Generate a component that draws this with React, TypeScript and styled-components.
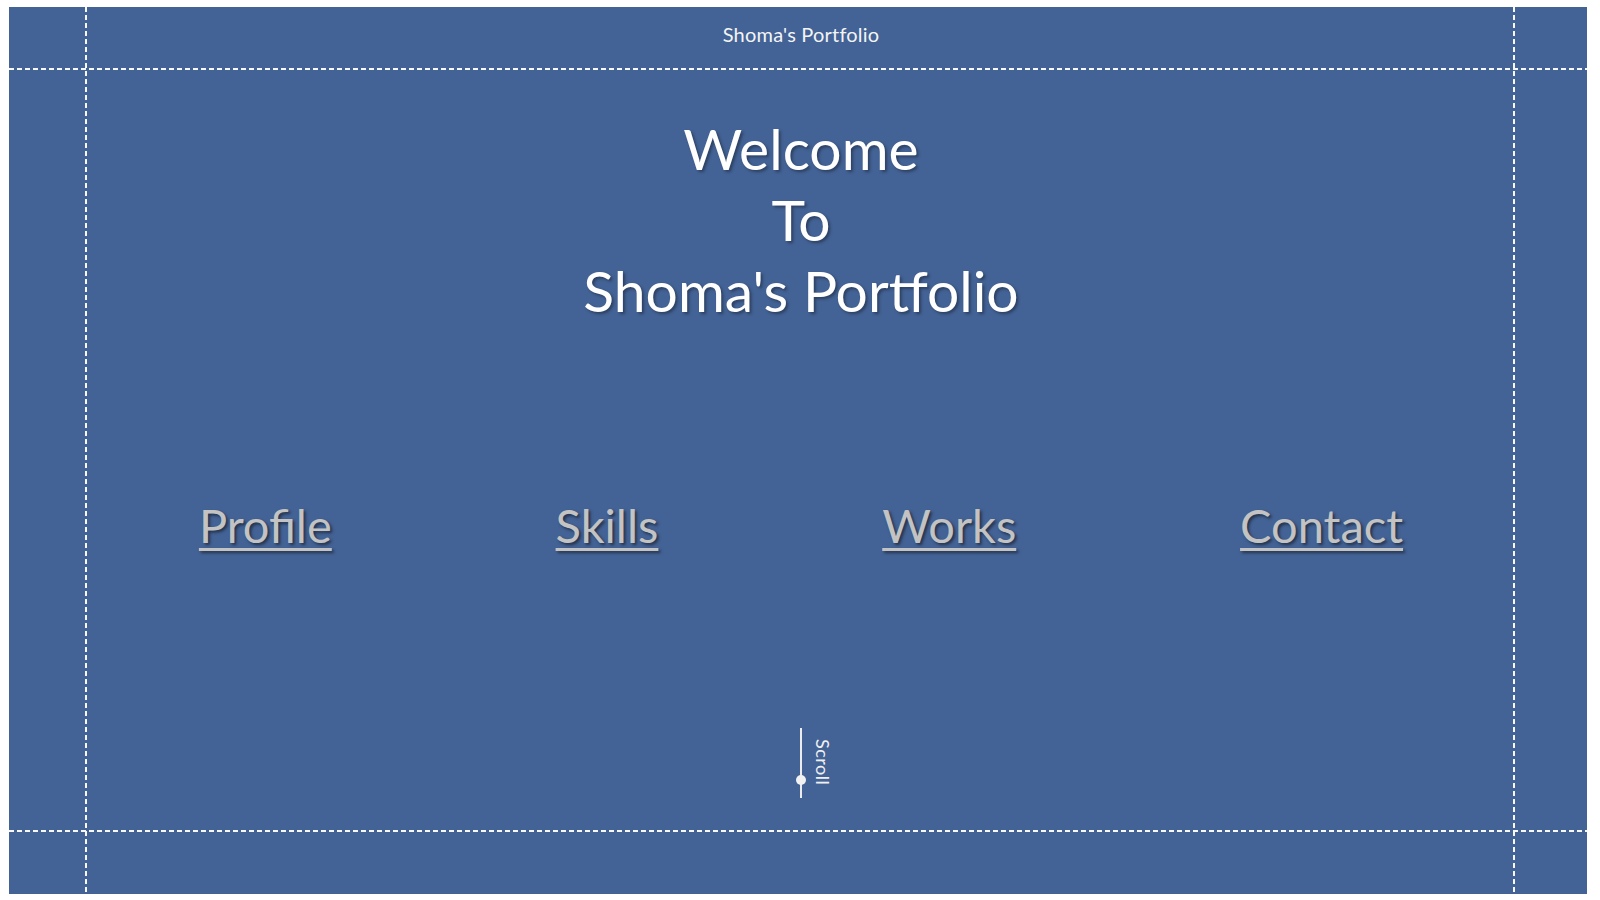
import styled, { createGlobalStyle } from 'styled-components';

const GlobalStyle = createGlobalStyle`
  html, body {
    margin: 0;
    padding: 0;
    background: #fff;
  }
  body {
    font-family: Lato, 'Open Sans', sans-serif;
  }
`;

const dash = '#f8f8f8';

const Frame = styled.div`
  margin: 7px 13px 6px 9px;
  height: 887px;
  display: grid;
  grid-template-columns: 78px 1fr 72px;
  grid-template-rows: 63px 1fr 62px;
  background-color: #436295;
  background-image:
    repeating-linear-gradient(to right, ${dash} 0 5px, transparent 5px 8px),
    repeating-linear-gradient(to right, ${dash} 0 5px, transparent 5px 8px),
    repeating-linear-gradient(to bottom, ${dash} 0 5px, transparent 5px 8px),
    repeating-linear-gradient(to bottom, ${dash} 0 5px, transparent 5px 8px);
  background-size: 100% 2px, 100% 2px, 2px 100%, 2px 100%;
  background-position: 0 61px, 0 calc(100% - 62px), 76px 0, calc(100% - 72px) 0;
  background-repeat: no-repeat;
`;

const Header = styled.header`
  grid-column: 2;
  grid-row: 1;
  display: flex;
  align-items: center;
  justify-content: center;
  padding-bottom: 10px;
  color: #f4f4f4;
  font-size: 20px;
  letter-spacing: 0.2px;
`;

const Main = styled.main`
  grid-column: 2;
  grid-row: 2;
  display: flex;
  flex-direction: column;
  align-items: stretch;
`;

const Title = styled.h1`
  margin: 43px 0 0;
  text-align: center;
  font-weight: 400;
  font-size: 57px;
  line-height: 71px;
  color: #fff;
  text-shadow: 2px 2px 3px rgba(0, 0, 0, 0.35);
`;

const Nav = styled.nav`
  margin-top: 171px;
  display: flex;
  justify-content: space-around;
`;

const NavLink = styled.a`
  font-size: 47px;
  line-height: 56px;
  color: #c3c3c3;
  text-decoration: underline;
  text-decoration-thickness: 3px;
  text-underline-offset: 5px;
  text-shadow: 2px 2px 3px rgba(0, 0, 0, 0.5);
  cursor: pointer;
`;

const ScrollWrap = styled.div`
  margin-top: 175px;
  display: grid;
  grid-template-columns: 1fr 2px 1fr;
  column-gap: 10px;
`;

const ScrollLine = styled.div`
  grid-column: 2;
  position: relative;
  height: 70px;
  background: #ececec;
`;

const ScrollDot = styled.span`
  position: absolute;
  left: 50%;
  top: 47px;
  width: 10px;
  height: 10px;
  border-radius: 50%;
  background: #f2f2f2;
  transform: translateX(-50%);
`;

const ScrollText = styled.span`
  grid-column: 3;
  justify-self: start;
  margin-top: 11px;
  writing-mode: vertical-rl;
  font-size: 18px;
  letter-spacing: 0.5px;
  color: #f0f0f0;
`;

const links = ['Profile', 'Skills', 'Works', 'Contact'];

export default function App() {
  return (
    <>
      <GlobalStyle />
      <Frame>
        <Header>Shoma's Portfolio</Header>
        <Main>
          <Title>
            Welcome
            <br />
            To
            <br />
            Shoma's Portfolio
          </Title>
          <Nav>
            {links.map((l) => (
              <NavLink key={l}>{l}</NavLink>
            ))}
          </Nav>
          <ScrollWrap>
            <ScrollLine>
              <ScrollDot />
            </ScrollLine>
            <ScrollText>Scroll</ScrollText>
          </ScrollWrap>
        </Main>
      </Frame>
    </>
  );
}
